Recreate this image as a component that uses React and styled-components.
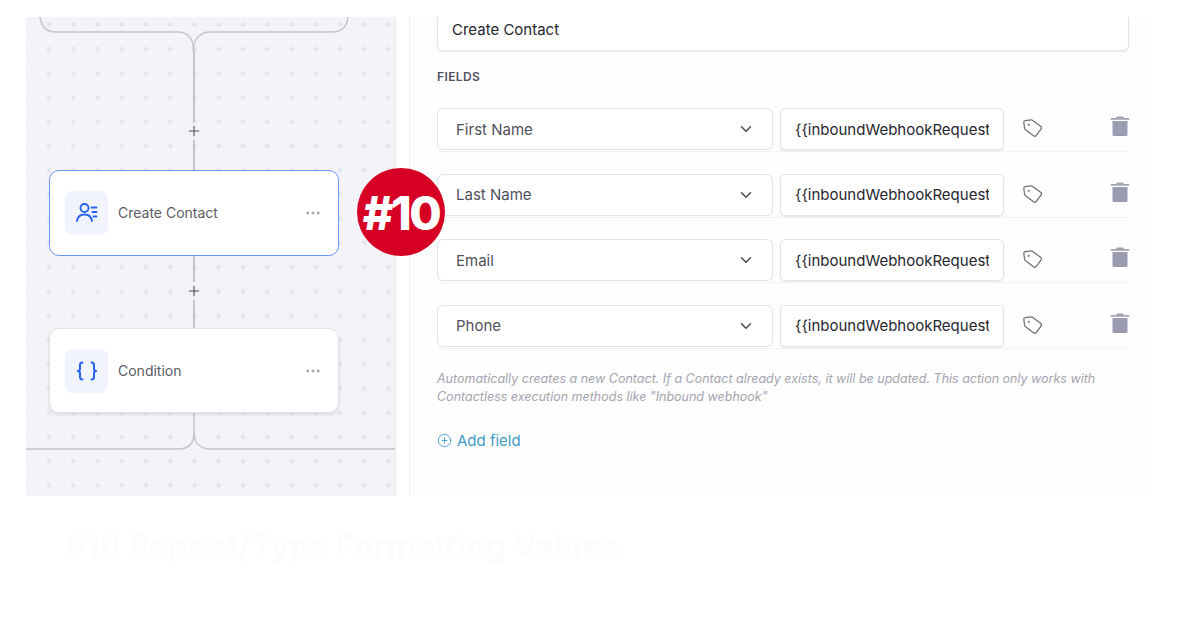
import React from 'react';
import styled, { createGlobalStyle } from 'styled-components';
import { ChevronDown, CirclePlus, Ellipsis, Plus, Tag } from 'lucide-react';

const GlobalStyle = createGlobalStyle`
  html, body {
    margin: 0;
    padding: 0;
    background: #ffffff;
  }
  body {
    font-family: Inter, "Liberation Sans", sans-serif;
    color: #1f1f29;
  }
`;

const Page = styled.div`
  position: relative;
  width: 1200px;
  height: 630px;
  overflow: hidden;
`;

const Shot = styled.div`
  display: flex;
  width: 1122px;
  height: 479px;
  margin-left: 26px;
  padding-top: 17px;
`;

const Canvas = styled.section`
  flex: 0 0 370px;
  display: flex;
  flex-direction: column;
  padding-left: 23px;
  box-sizing: border-box;
  background-color: #f3f3f8;
  background-image: radial-gradient(circle, #e4e4ec 2px, transparent 2.4px);
  background-size: 24.25px 24.25px;
  background-position: 10.9px 19.9px;
  border-right: 1px solid #e9e9ef;
`;

const Flow = styled.div`
  width: 290px;
  display: flex;
  flex-direction: column;
  align-items: center;
`;

const TopBracket = styled.svg`
  display: block;
  flex: none;
`;

const Line = styled.div`
  width: 1.5px;
  height: ${(p) => p.$h}px;
  background: #c4c4ca;
`;

const AddStep = styled.div`
  display: flex;
  align-items: center;
  justify-content: center;
  height: 18px;
  color: #4f4f59;
`;

const Node = styled.div`
  width: 290px;
  height: ${(p) => p.$h}px;
  flex: none;
  box-sizing: border-box;
  display: flex;
  align-items: center;
  padding: 0 16px 0 15px;
  gap: 10px;
  background: #ffffff;
  border-radius: 10px;
  border: 1.5px solid ${(p) => (p.$active ? '#6a97f5' : '#e3e3e8')};
  box-shadow: ${(p) => (p.$active ? 'none' : '0 2px 3px rgba(60, 60, 80, 0.12)')};
`;

const NodeIcon = styled.div`
  width: 43px;
  height: 44px;
  flex: none;
  border-radius: 8px;
  background: #f1f4fe;
  display: flex;
  align-items: center;
  justify-content: center;
`;

const NodeLabel = styled.span`
  flex: 1;
  font-size: 14px;
  line-height: 18px;
  color: #5b5b66;
`;

const NodeMenu = styled.span`
  display: flex;
  color: #a6a6ae;
`;

const BottomJoin = styled.svg`
  display: block;
  flex: none;
  margin-left: -23px;
  align-self: flex-start;
`;

const Panel = styled.section`
  flex: 1;
  margin-left: 13px;
  padding-left: 27px;
  background: #fefefe;
  border-left: 1px solid #ececf1;
  overflow: hidden;
`;

const NameField = styled.div`
  width: 692px;
  height: 43px;
  margin-top: -9px;
  box-sizing: border-box;
  display: flex;
  align-items: center;
  padding: 0 14px;
  background: #fff;
  border: 1px solid #e2e2e7;
  border-radius: 5px;
  box-shadow: 0 1px 2px rgba(60, 60, 80, 0.1);
  font-size: 15px;
  color: #26262e;
`;

const SectionTitle = styled.h4`
  margin: 19px 0 24px;
  font-size: 12px;
  line-height: 14px;
  font-weight: 600;
  letter-spacing: 0.4px;
  color: #50505e;
`;

const Rows = styled.div`
  display: flex;
  flex-direction: column;
  gap: 21.5px;
`;

const Row = styled.div`
  width: 692px;
  height: 43px;
  display: flex;
  align-items: flex-start;
  border-bottom: 1px solid #f3f3f5;
`;

const Select = styled.div`
  width: 336px;
  height: 42px;
  flex: none;
  box-sizing: border-box;
  display: flex;
  align-items: center;
  justify-content: space-between;
  padding: 0 17px 0 18px;
  background: #fff;
  border: 1px solid #e2e2e7;
  border-radius: 6px;
  font-size: 15px;
  color: #50505c;
`;

const ValueBox = styled.div`
  width: 224px;
  height: 42px;
  flex: none;
  margin-left: 7px;
  box-sizing: border-box;
  display: flex;
  align-items: center;
  padding: 0 14px;
  background: #fff;
  border: 1px solid #e2e2e7;
  border-radius: 5px;
  box-shadow: 0 1px 2px rgba(60, 60, 80, 0.1);
  font-size: 15px;
  color: #26262e;
`;

const ValueText = styled.span`
  display: block;
  width: 100%;
  overflow: hidden;
  white-space: nowrap;
`;

const TagSlot = styled.span`
  display: flex;
  margin: 10px 0 0 19px;
  color: #6f6f78;
  transform: rotate(-8deg);
`;

const TrashSlot = styled.span`
  display: flex;
  margin: 7px 0 0 67px;
`;

const Hint = styled.p`
  width: 680px;
  margin: 21px 0 0;
  font-size: 12.5px;
  line-height: 18px;
  font-style: italic;
  color: #a4a4ae;
`;

const AddField = styled.div`
  display: flex;
  align-items: center;
  gap: 5px;
  margin-top: 25px;
  font-size: 15px;
  line-height: 20px;
  color: #3f9bc6;
`;

const Badge = styled.div`
  position: absolute;
  left: 357px;
  top: 168px;
  width: 88px;
  height: 88px;
  border-radius: 50%;
  background: #d60024;
  display: flex;
  align-items: center;
  justify-content: center;
  color: #fff;
  font-size: 47px;
  font-weight: 800;
  letter-spacing: -2.5px;
`;

const Caption = styled.div`
  position: absolute;
  left: 65px;
  top: 527px;
  font-size: 32px;
  line-height: 40px;
  font-weight: 700;
  white-space: nowrap;
  color: #fcfcfd;
`;

const ContactIcon = () => (
  <svg width="26" height="26" viewBox="0 0 26 26" fill="none" stroke="#2563eb" strokeWidth="1.8" strokeLinecap="round">
    <circle cx="10.5" cy="8" r="4" />
    <path d="M3 21c.6-4 3.6-6.5 7.5-6.5S17.400 17 18 21" />
    <path d="M17.500 7.500h5M18.500 12h4M19.500 16.500h3" />
  </svg>
);

const BracesIcon = () => (
  <svg width="22" height="22" viewBox="0 0 22 22" fill="none" stroke="#2563eb" strokeWidth="2" strokeLinecap="round" strokeLinejoin="round">
    <path d="M6.500 2.500c-2 0-2.500 1-2.500 2.500v3.500c0 1.500-.8 2.500-2.200 2.500 1.400 0 2.200 1 2.200 2.500V17c0 1.500.5 2.500 2.500 2.500" />
    <path d="M15.500 2.500c2 0 2.500 1 2.500 2.500v3.500c0 1.500.8 2.500 2.200 2.500-1.400 0-2.200 1-2.200 2.500V17c0 1.500-.5 2.500-2.500 2.500" />
  </svg>
);

const TrashIcon = () => (
  <svg width="20" height="22" viewBox="0 0 20 22">
    <path d="M7 1.500h6l1 1.500h4.500a.8.8 0 0 1 0 1.800h-17a.8.8 0 0 1 0-1.800H6z" fill="#a3a3b4" />
    <path d="M2.500 6h15v13.500a1.500 1.500 0 0 1-1.500 1.500H4a1.500 1.500 0 0 1-1.500-1.500z" fill="#9c9cb0" />
  </svg>
);

const fields = ['First Name', 'Last Name', 'Email', 'Phone'];

export default function App() {
  return (
    <Page>
      <GlobalStyle />
      <Shot>
        <Canvas>
          <Flow>
            <TopBracket width="310" height="33" viewBox="0 0 310 33" fill="none" stroke="#c4c4ca" strokeWidth="1.5">
              <path d="M1 0c1 9 6 15 16 15h122c9 0 15.500 6 15.500 18" />
              <path d="M309 0c-1 9-6 15-16 15H171c-9 0-16.500 6-16.500 18" />
            </TopBracket>
            <Line $h={72} />
            <AddStep><Plus size={16} strokeWidth={1.6} /></AddStep>
            <Line $h={30} />
            <Node $active $h={86}>
              <NodeIcon><ContactIcon /></NodeIcon>
              <NodeLabel>Create Contact</NodeLabel>
              <NodeMenu><Ellipsis size={18} strokeWidth={1.8} /></NodeMenu>
            </Node>
            <Line $h={26} />
            <AddStep><Plus size={16} strokeWidth={1.6} /></AddStep>
            <Line $h={28} />
            <Node $h={85}>
              <NodeIcon><BracesIcon /></NodeIcon>
              <NodeLabel>Condition</NodeLabel>
              <NodeMenu><Ellipsis size={18} strokeWidth={1.8} /></NodeMenu>
            </Node>
            <BottomJoin width="369" height="40" viewBox="0 0 369 40" fill="none" stroke="#c4c4ca" strokeWidth="1.5">
              <path d="M168 0v20c0 10-5 16-16 16H0" />
              <path d="M168 20c0 10 6 16 17 16h184" />
            </BottomJoin>
          </Flow>
        </Canvas>
        <Panel>
          <NameField>Create Contact</NameField>
          <SectionTitle>FIELDS</SectionTitle>
          <Rows>
            {fields.map((name) => (
              <Row key={name}>
                <Select>
                  {name}
                  <ChevronDown size={18} strokeWidth={2} color="#4c4c58" />
                </Select>
                <ValueBox>
                  <ValueText>{'{{inboundWebhookRequest.' + name.toLowerCase().replace(' ', '_') + '}}'}</ValueText>
                </ValueBox>
                <TagSlot><Tag size={20} strokeWidth={1.5} /></TagSlot>
                <TrashSlot><TrashIcon /></TrashSlot>
              </Row>
            ))}
          </Rows>
          <Hint>
            Automatically creates a new Contact. If a Contact already exists, it will be updated. This action only works with Contactless execution methods like "Inbound webhook"
          </Hint>
          <AddField>
            <CirclePlus size={15} strokeWidth={1.4} />
            Add field
          </AddField>
        </Panel>
      </Shot>
      <Badge>#10</Badge>
      <Caption>#10 Repeat/Type Formatting Values</Caption>
    </Page>
  );
}
